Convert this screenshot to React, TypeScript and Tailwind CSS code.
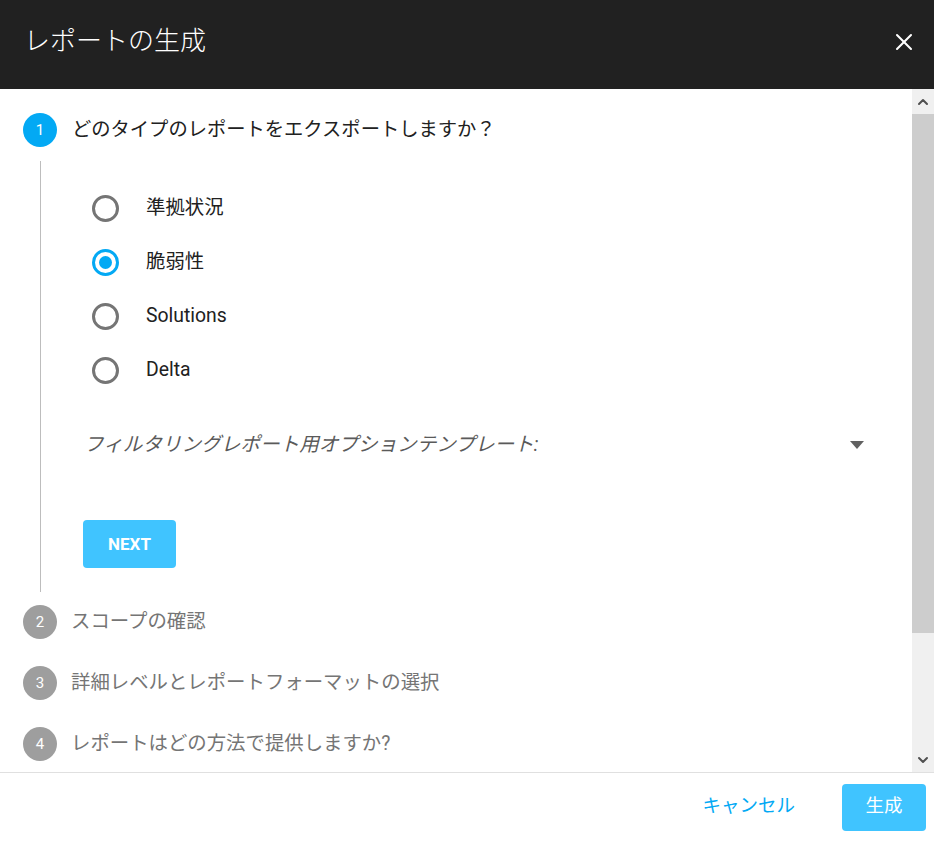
import { X, ChevronUp, ChevronDown } from "lucide-react";

const font = { fontFamily: 'Roboto, "Noto Sans CJK JP", sans-serif' };

export default function App() {
  const options = [
    { label: "準拠状況", checked: false },
    { label: "脆弱性", checked: true },
    { label: "Solutions", checked: false },
    { label: "Delta", checked: false },
  ];

  const laterSteps = [
    { n: 2, title: "スコープの確認" },
    { n: 3, title: "詳細レベルとレポートフォーマットの選択" },
    { n: 4, title: "レポートはどの方法で提供しますか?" },
  ];

  return (
    <div className="w-[934px] h-[841px] bg-white flex flex-col overflow-hidden" style={font}>
      {/* Header */}
      <div className="h-[89px] bg-[#212121] flex items-center justify-between pl-6 pr-4 pb-[6px] shrink-0">
        <h1 className="text-[26px] text-white font-light">レポートの生成</h1>
        <X className="w-7 h-7 text-white" strokeWidth={1.75} />
      </div>

      {/* Body */}
      <div className="flex flex-1 min-h-0">
        <div className="flex-1 pt-[24px] pl-[23px]">
          {/* Step 1 */}
          <div className="flex items-center gap-[15px] h-[34px]">
            <div className="w-[34px] h-[34px] rounded-full bg-[#03a9f4] text-white text-[15px] flex items-center justify-center">
              1
            </div>
            <span className="text-[19.3px] text-[#212121]">どのタイプのレポートをエクスポートしますか？</span>
          </div>

          <div className="flex">
            <div className="w-[18px] border-r border-[#bdbdbd] mt-[14px] h-[431px]" />
            <div className="flex-1 pl-[51px] pt-[34px]">
              <div className="flex flex-col">
                {options.map((o) => (
                  <div key={o.label} className="flex items-center h-[54px] gap-[27px]">
                    {o.checked ? (
                      <div className="w-[27px] h-[27px] rounded-full border-[3px] border-[#03a9f4] flex items-center justify-center">
                        <div className="w-[13px] h-[13px] rounded-full bg-[#03a9f4]" />
                      </div>
                    ) : (
                      <div className="w-[27px] h-[27px] rounded-full border-[3px] border-[#757575]" />
                    )}
                    <span className="text-[19.4px] text-[#212121]">{o.label}</span>
                  </div>
                ))}
              </div>

              <div className="flex items-center justify-between mt-[33px] pr-[48px] -ml-[8px]">
                <span className="text-[19.6px] italic text-[#5a5a5a]">フィルタリングレポート用オプションテンプレート:</span>
                <div className="w-0 h-0 border-l-[7px] border-r-[7px] border-t-[8px] border-l-transparent border-r-transparent border-t-[#616161]" />
              </div>

              <button className="mt-[61px] -ml-[9px] w-[93px] h-[48px] rounded bg-[#40c4ff] text-white text-[17px] font-bold">
                NEXT
              </button>
            </div>
          </div>

          {/* Later steps */}
          <div className="flex flex-col mt-[13px] gap-[27px]">
            {laterSteps.map((s) => (
              <div key={s.n} className="flex items-center gap-[14px] h-[34px]">
                <div className="w-[34px] h-[34px] rounded-full bg-[#9e9e9e] text-white text-[15px] flex items-center justify-center">
                  {s.n}
                </div>
                <span className="text-[19.4px] text-[#757575]">{s.title}</span>
              </div>
            ))}
          </div>
        </div>

        {/* Scrollbar */}
        <div className="w-[22px] bg-[#f0f0f0] flex flex-col shrink-0">
          <div className="h-[25px] flex items-center justify-center">
            <ChevronUp className="w-4 h-4 text-[#505050]" strokeWidth={3} />
          </div>
          <div className="h-[519px] bg-[#cdcdcd]" />
          <div className="flex-1" />
          <div className="h-[25px] flex items-center justify-center">
            <ChevronDown className="w-4 h-4 text-[#505050]" strokeWidth={3} />
          </div>
        </div>
      </div>

      {/* Footer */}
      <div className="h-[69px] border-t border-[#e0e0e0] flex items-center justify-end gap-[47px] pr-[8px] shrink-0">
        <span className="text-[18.5px] text-[#03a9f4]">キャンセル</span>
        <button className="w-[84px] h-[47px] rounded bg-[#40c4ff] text-white text-[18.5px]">生成</button>
      </div>
    </div>
  );
}
